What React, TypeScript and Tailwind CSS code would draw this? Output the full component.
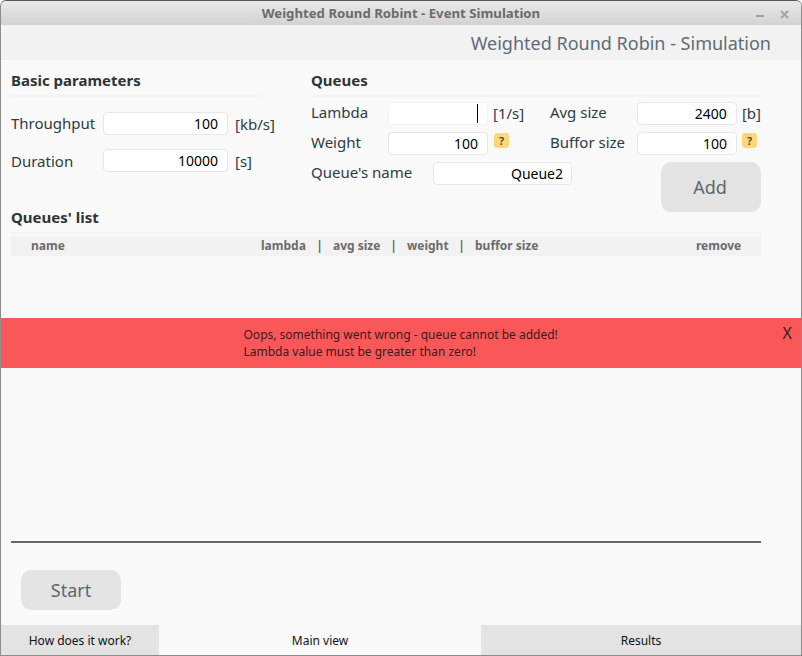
const FONT = "font-['Noto_Sans',sans-serif]";

const Field = ({ value, className = '' }: { value: string; className?: string }) => (
  <input
    readOnly
    value={value}
    className={`h-[23px] shrink-0 rounded-[4px] border border-[#e6e6e6] bg-white text-right text-[14px] text-black outline-none ${className}`}
  />
);

const Hint = () => (
  <span className="mb-[6px] flex h-[15px] w-[15px] shrink-0 items-center justify-center rounded-[3px] bg-[#ffd778] text-[11px] font-semibold leading-none text-[#3a3a3a]">
    ?
  </span>
);

const Heading = ({ children }: { children: string }) => (
  <h2 className="h-[27px] border-b-2 border-[#f2f2f2] text-[15px] font-bold leading-[20px] text-[#2e3436]">{children}</h2>
);

const Label = ({ children, className = '' }: { children: string; className?: string }) => (
  <span className={`shrink-0 text-[15px] leading-[20px] text-[#2e3a46] ${className}`}>{children}</span>
);

const Unit = ({ children }: { children: string }) => (
  <span className="text-[15px] leading-[20px] text-[#2e3a46]">{children}</span>
);

export default function App() {
  return (
    <div className={`${FONT} flex h-[656px] w-[802px] flex-col overflow-hidden rounded-t-[6px] border border-t-[#555] border-x-[#8c8c8c] border-b-[#8c8c8c] bg-[#f9f9f9]`}>
      {/* title bar */}
      <div className="relative flex h-[24px] shrink-0 items-center justify-center bg-gradient-to-b from-[#e9e9e9] to-[#d2d2d2] pt-[1px] text-[13.2px] font-bold text-[#6b6b6b]">
        Weighted Round Robint - Event Simulation
        <div className="absolute right-[12px] top-[1px] flex h-full items-center gap-[16px] text-[#a3a3a3]">
          <svg width="8" height="9" viewBox="0 0 8 9"><rect x="0" y="5" width="8" height="2" fill="currentColor" /></svg>
          <svg width="9" height="9" viewBox="0 0 9 9"><path d="M1 1l7 7M8 1L1 8" stroke="currentColor" strokeWidth="2" /></svg>
        </div>
      </div>

      {/* header */}
      <div className="flex h-[35px] shrink-0 items-center justify-end bg-[#f2f2f2] pr-[30px] pt-[2px] text-[18px] text-[#5e6b78]">
        Weighted Round Robin - Simulation
      </div>

      {/* form */}
      <div className="flex h-[147px] shrink-0 gap-[50px] px-[10px] pt-[10px]">
        <div className="w-[250px]">
          <Heading>Basic parameters</Heading>
          <div className="mt-[15px] flex h-[23px] items-center">
            <Label className="mb-[2px] w-[92px]">Throughput</Label>
            <Field value="100" className="w-[125px] pr-[9px]" />
            <span className="ml-[7px] leading-[20px]"><Unit>[kb/s]</Unit></span>
          </div>
          <div className="mt-[14px] flex h-[23px] items-center">
            <Label className="w-[92px]">Duration</Label>
            <Field value="10000" className="w-[125px] pr-[9px]" />
            <span className="ml-[7px] leading-[20px]"><Unit>[s]</Unit></span>
          </div>
        </div>

        <div className="w-[450px]">
          <Heading>Queues</Heading>
          <div className="mt-[5px] flex h-[23px] items-center">
            <Label className="mb-[4px] w-[77px]">Lambda</Label>
            <div className="relative shrink-0">
              <Field value="" className="block w-[100px] border-[#f4f4f4] pr-[9px]" />
              <div className="absolute left-[89px] top-[2px] h-[19px] w-px bg-black" />
            </div>
            <span className="mb-[2px] ml-[5px] w-[57px] leading-[20px]"><Unit>[1/s]</Unit></span>
            <Label className="mb-[4px] w-[87px]">Avg size</Label>
            <Field value="2400" className="w-[100px] pr-[9px]" />
            <span className="mb-[2px] ml-[5px] leading-[20px]"><Unit>[b]</Unit></span>
          </div>
          <div className="mt-[7px] flex h-[23px] items-center">
            <Label className="mb-[4px] w-[77px]">Weight</Label>
            <Field value="100" className="w-[100px] pr-[9px]" />
            <span className="ml-[6px] w-[56px]"><Hint /></span>
            <Label className="mb-[4px] w-[87px]">Buffor size</Label>
            <Field value="100" className="w-[100px] pr-[9px]" />
            <span className="ml-[5px]"><Hint /></span>
          </div>
          <div className="mt-[7px] flex items-start justify-between">
            <div className="flex h-[23px] items-center">
              <Label className="mb-[4px] w-[122px]">Queue's name</Label>
              <Field value="Queue2" className="w-[139px] pr-[8px]" />
            </div>
            <button className="h-[50px] w-[100px] rounded-[10px] bg-[#e3e3e3] pr-[2px] text-[18px] text-[#5e6670]">Add</button>
          </div>
        </div>
      </div>

      {/* queues list */}
      <div className="h-[111px] shrink-0 pl-[10px] pr-[40px]">
        <h2 className="h-[27px] border-b-2 border-[#f2f2f2] text-[15px] font-bold leading-[20px] text-[#2e3436]">Queues' list</h2>
        <div className="mt-[2px] flex h-[20px] items-center whitespace-nowrap bg-[#f2f2f2] text-[12px] font-bold text-[#6b6b6b]">
          <span className="ml-[20px] w-[230px]">name</span>
          <span className="w-[45px]">lambda</span>
          <span className="w-[27px] text-center text-[#5e6b78]">|</span>
          <span className="w-[47px]">avg size</span>
          <span className="w-[27px] text-center text-[#5e6b78]">|</span>
          <span className="w-[41px]">weight</span>
          <span className="w-[27px] text-center text-[#5e6b78]">|</span>
          <span className="w-[221px]">buffor size</span>
          <span>remove</span>
        </div>
      </div>

      {/* error banner */}
      <div className="relative h-[50px] shrink-0 bg-[#fa5858] pl-[243px] pt-[8px] text-[12px] leading-[17px] text-[#3a1a1e]">
        <p className="-ml-[0.5px]">Oops, something went wrong - queue cannot be added!</p>
        <p className="-ml-[0.5px]">Lambda value must be greater than zero!</p>
        <span className="absolute right-[9px] top-[5px] text-[16px] leading-[20px]">X</span>
      </div>

      <div className="flex-1 px-[10px]">
        <div className="mt-[173px] h-[2px] w-[750px] bg-[#666666]" />
        <button className="ml-[10px] mt-[27px] h-[40px] w-[100px] rounded-[10px] bg-[#e3e3e3] text-[18px] text-[#5e6670]">Start</button>
      </div>

      {/* tabs */}
      <div className="flex h-[30px] shrink-0 text-[12px] text-[#111]">
        <div className="flex w-[158px] items-center justify-center bg-[#e3e3e3] pt-[2px]">How does it work?</div>
        <div className="flex w-[322px] items-center justify-center pt-[2px]">Main view</div>
        <div className="flex flex-1 items-center justify-center bg-[#e3e3e3] pt-[2px]">Results</div>
      </div>
    </div>
  );
}
